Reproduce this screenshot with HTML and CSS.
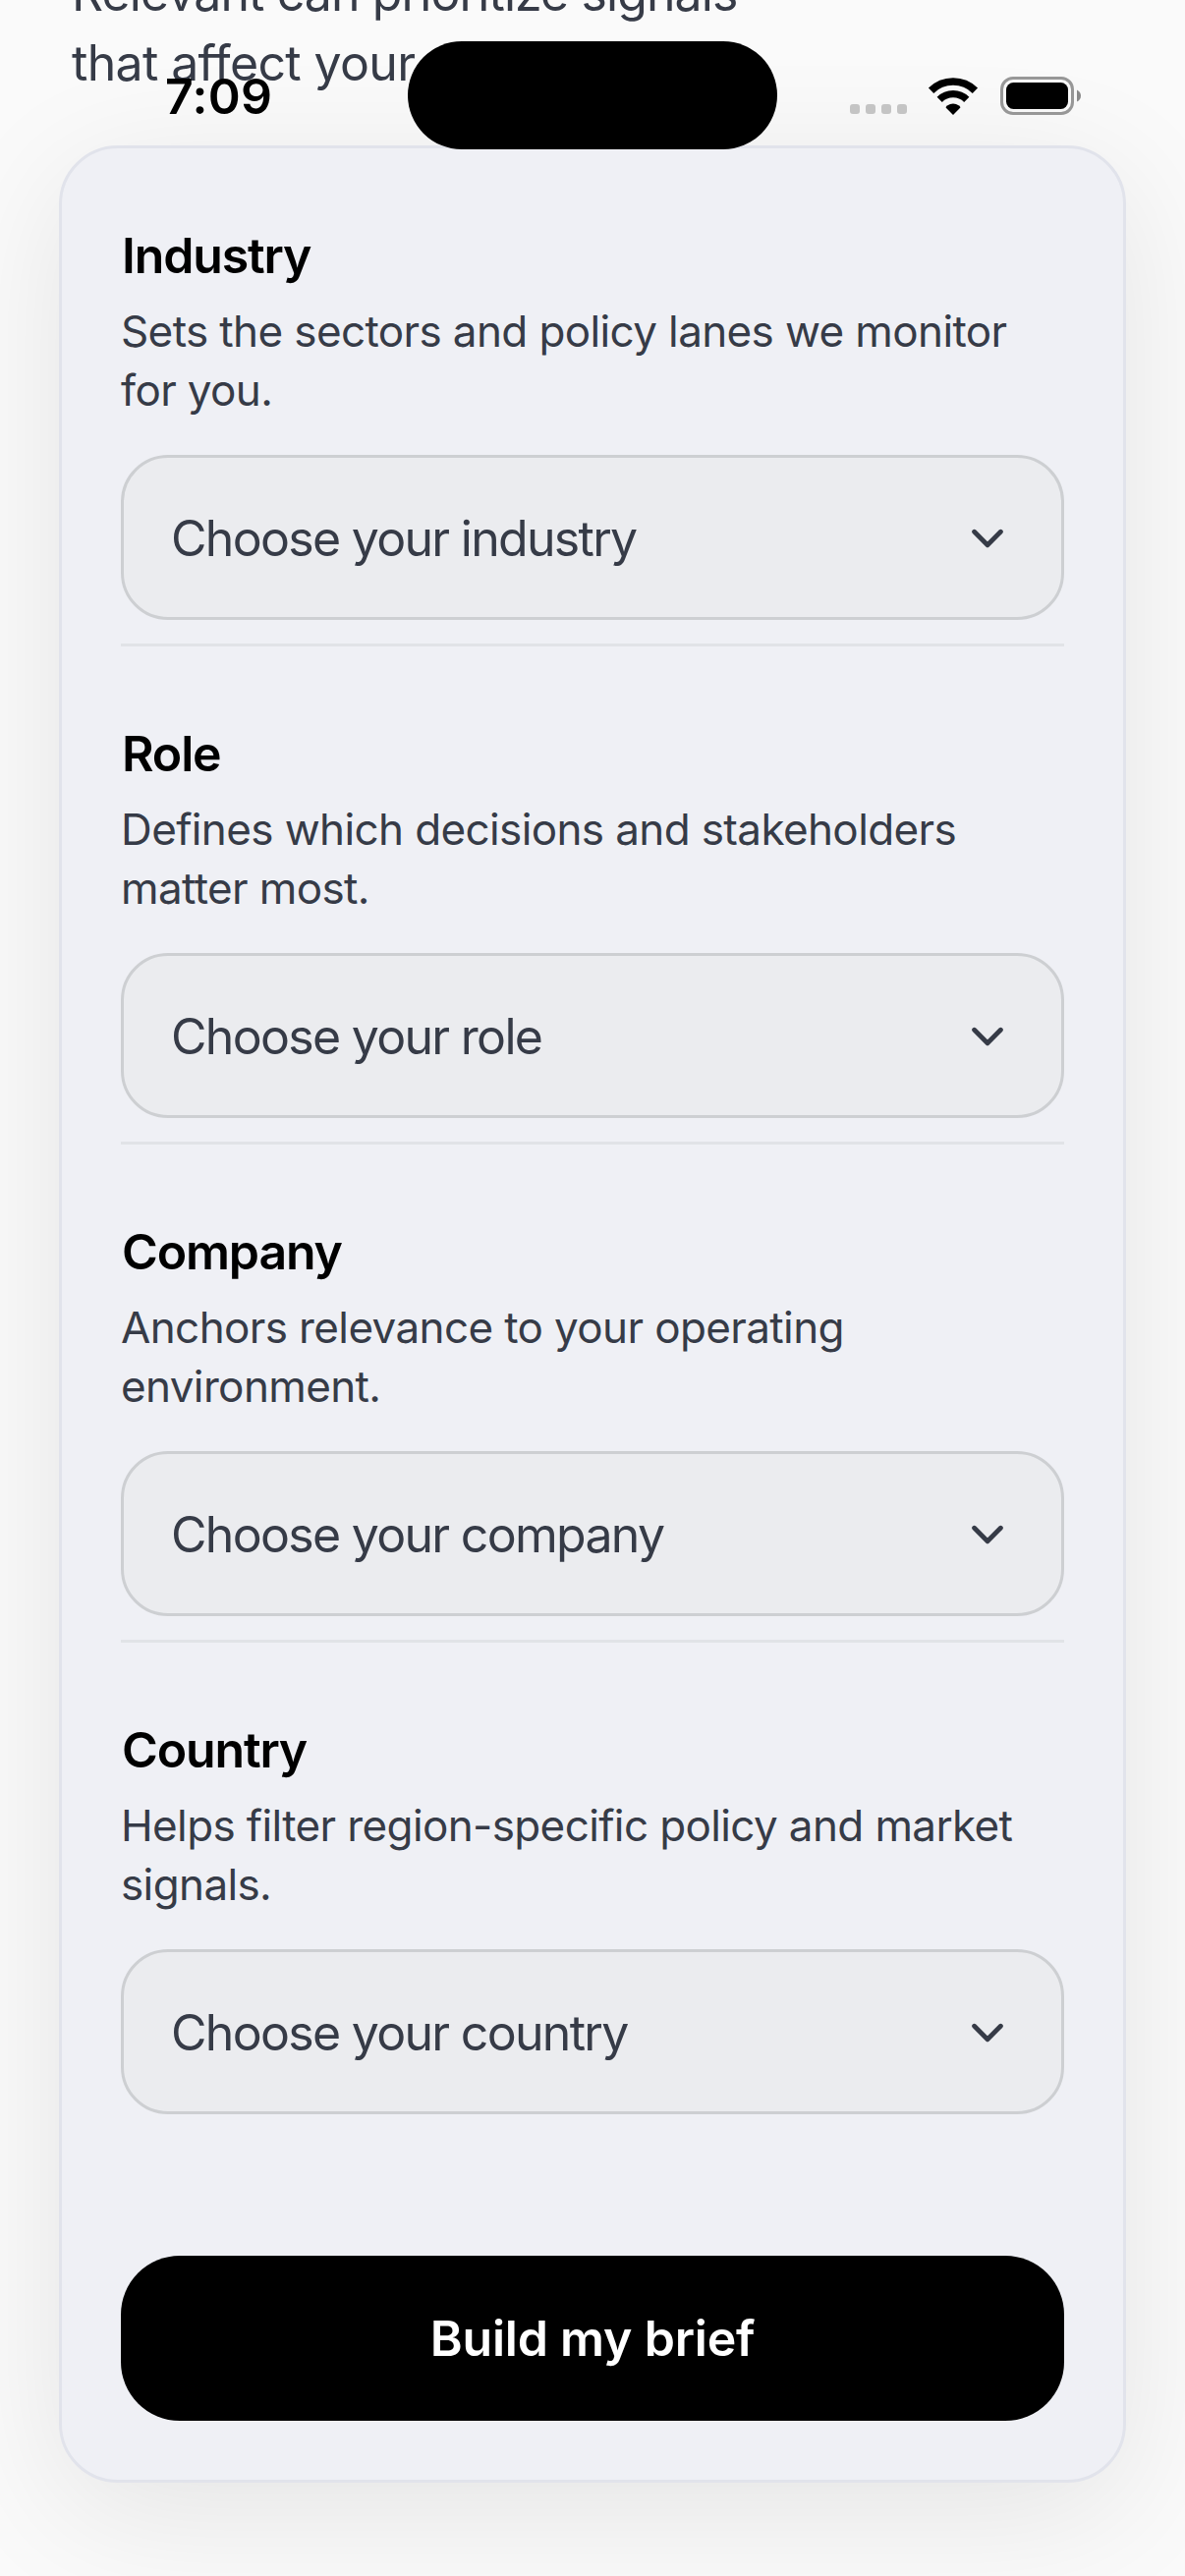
FILE: index.html
```html
<!DOCTYPE html>
<html lang="en">
<head>
    <meta charset="UTF-8">
    <meta name="viewport" content="width=device-width, initial-scale=1.0">
    <title>Relevant - Build my brief</title>
    <link rel="stylesheet" href="styles.css">
</head>
<body>
    <!-- Status bar -->
    <div class="status-bar">
        <span class="time">7:09</span>
        <div class="island"></div>
        <div class="status-icons">
            <div class="signal"><i></i><i></i><i></i><i></i></div>
            <svg class="wifi" width="52" height="38" viewBox="0 0 52 38">
                <path d="M3.6 13.2 A32 32 0 0 1 48.4 13.2" fill="none" stroke="#000" stroke-width="7.6"/>
                <path d="M12.2 22.3 A19.6 19.6 0 0 1 39.8 22.3" fill="none" stroke="#000" stroke-width="7.4"/>
                <path d="M26 38 L18.6 30.4 Q18.6 29.6 20 28.6 Q26 24.4 32 28.6 Q33.4 29.6 33.4 30.4 Z" fill="#000"/>
            </svg>
            <svg class="battery" width="82" height="39" viewBox="0 0 82 39">
                <rect x="1.5" y="1.5" width="72" height="36" rx="11.5" fill="none" stroke="#979797" stroke-width="3"/>
                <rect x="6" y="6" width="63" height="27" rx="7.5" fill="#000"/>
                <path d="M78 13.5 Q82 15.5 82 19.5 Q82 23.5 78 25.5 Z" fill="#8a8a8a"/>
            </svg>
        </div>
    </div>

    <p class="intro">Relevant can prioritize signals<br><span class="intro-end">that affect your</span></p>

    <main class="card">
        <section class="field">
            <h2>Industry</h2>
            <p>Sets the sectors and policy lanes we monitor<br>for you.</p>
            <div class="select">
                <span>Choose your industry</span>
                <svg class="chevron" width="32" height="20" viewBox="0 0 32 20"><path d="M2.6 3.3 L16 16.7 L29.4 3.3"/></svg>
            </div>
        </section>
        <section class="field">
            <h2>Role</h2>
            <p>Defines which decisions and stakeholders<br>matter most.</p>
            <div class="select">
                <span>Choose your role</span>
                <svg class="chevron" width="32" height="20" viewBox="0 0 32 20"><path d="M2.6 3.3 L16 16.7 L29.4 3.3"/></svg>
            </div>
        </section>
        <section class="field">
            <h2>Company</h2>
            <p>Anchors relevance to your operating<br>environment.</p>
            <div class="select">
                <span>Choose your company</span>
                <svg class="chevron" width="32" height="20" viewBox="0 0 32 20"><path d="M2.6 3.3 L16 16.7 L29.4 3.3"/></svg>
            </div>
        </section>
        <section class="field">
            <h2>Country</h2>
            <p>Helps filter region-specific policy and market<br>signals.</p>
            <div class="select">
                <span>Choose your country</span>
                <svg class="chevron" width="32" height="20" viewBox="0 0 32 20"><path d="M2.6 3.3 L16 16.7 L29.4 3.3"/></svg>
            </div>
        </section>
        <button class="submit" type="button">Build my brief</button>
    </main>
</body>
</html>
```

FILE: styles.css
```css
* { box-sizing: border-box; }
body {
    margin: 0;
    height: 2622px;
    overflow: hidden;
    position: relative;
    display: flow-root;
    background: #fafafa;
    font-family: Inter, "Liberation Sans", sans-serif;
    font-size: 50px;
    color: #363b47;
}

/* Status bar floats over the scrolled page */
.status-bar {
    position: absolute;
    top: 42px;
    left: 0;
    width: 100%;
    height: 110px;
    z-index: 1;
    display: grid;
    grid-template-columns: 415px 376px 1fr;
}
.time {
    padding: 26px 0 0 168px;
    line-height: 60px;
    font-weight: 600;
    letter-spacing: 0.3px;
    color: #000;
}
.island {
    background: #000;
    border-radius: 55px;
}
.status-icons {
    display: flex;
    align-items: flex-start;
    padding: 36px 0 0 74px;
}
.signal {
    display: flex;
    gap: 6px;
    margin-top: 28px;
}
.signal i {
    width: 10px;
    height: 10px;
    border-radius: 3px;
    background: #c4c4c4;
}
.wifi { margin: 1px 0 0 21px; }
.battery { margin-left: 22px; }

.intro {
    margin: -42px 0 48px 73px;
    line-height: 71px;
    letter-spacing: -0.9px;
}
.intro-end { letter-spacing: -0.65px; }

.card {
    width: 1086px;
    margin: 0 60px;
    padding: 0 60px 60px;
    background: #eff0f5;
    border: 3px solid #e1e3eb;
    border-radius: 60px;
    box-shadow: 0 30px 135px rgba(0, 0, 0, 0.09);
}
.field {
    padding: 79px 0 24px;
    border-bottom: 3px solid #e1e3e7;
}
.field:last-of-type { border-bottom: none; }
.field h2 {
    margin: 0 0 0 1px;
    font-size: 50px;
    line-height: 60px;
    font-weight: 600;
    letter-spacing: -1.15px;
    color: #000;
}
.field p {
    margin: 17px 0 36px;
    font-size: 44px;
    line-height: 60px;
    letter-spacing: -0.62px;
}
.select {
    display: flex;
    align-items: center;
    justify-content: space-between;
    height: 168px;
    padding: 2px 59px 0 48px;
    background: #ebecef;
    border: 3px solid #cdcfd2;
    border-radius: 48px;
    line-height: 60px;
    letter-spacing: -1.7px;
}
.chevron path {
    fill: none;
    stroke: #363b47;
    stroke-width: 4.8;
    stroke-linecap: round;
    stroke-linejoin: round;
}
.submit {
    display: block;
    width: 100%;
    height: 168px;
    margin: 120px 0 0;
    padding: 0;
    border: none;
    border-radius: 60px;
    background: #000;
    color: #fff;
    font: 600 50px/60px Inter, "Liberation Sans", sans-serif;
    letter-spacing: -0.2px;
}
```
